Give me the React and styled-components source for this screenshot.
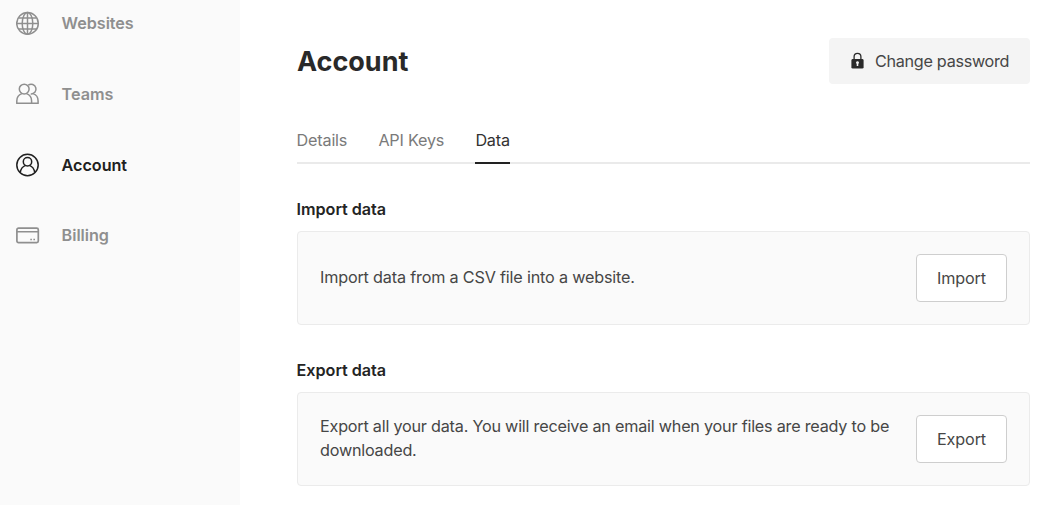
import React from "react";
import styled, { createGlobalStyle } from "styled-components";

const GlobalStyle = createGlobalStyle`
  * { box-sizing: border-box; }
  body {
    margin: 0;
    background: #fff;
    color: #3d3d3d;
    font-family: Inter, "Liberation Sans", sans-serif;
    font-size: 16.2px;
    font-weight: 400;
    overflow: hidden;
  }
`;

const Layout = styled.div`
  display: flex;
  height: 505px;
  width: 1051px;
`;

const Sidebar = styled.nav`
  width: 240px;
  flex: none;
  background: #fafafa;
  padding-left: 16px;
  display: flex;
  flex-direction: column;
  gap: 46.7px;
`;

const NavItem = styled.a`
  display: flex;
  align-items: center;
  gap: 21.6px;
  height: 24px;
  font-weight: 600;
  font-size: 16.2px;
  letter-spacing: -0.05px;
  line-height: 22px;
  color: ${(p) => (p.$active ? "#202020" : "#8f8f8f")};
  &:first-child { margin-top: 11.3px; }
`;

const NavIcon = styled.svg`
  width: 24px;
  height: 24px;
  flex: none;
  fill: none;
  stroke: currentColor;
  stroke-width: 1.5;
`;

const Main = styled.main`
  flex: 1;
  padding: 38px 21px 0 57px;
`;

const Header = styled.header`
  display: flex;
  justify-content: space-between;
  align-items: center;
  height: 46px;
`;

const Title = styled.h1`
  margin: 2px 0 0;
  font-size: 27px;
  line-height: 32px;
  font-weight: 700;
  color: #292929;
`;

const PasswordButton = styled.button`
  display: flex;
  align-items: center;
  gap: 10px;
  width: 201px;
  height: 46px;
  padding: 0 0 0 22px;
  border: 0;
  border-radius: 4px;
  background: #f4f4f4;
  color: #464646;
  font: inherit;
  letter-spacing: -0.3px;
  white-space: nowrap;
`;

const Tabs = styled.div`
  display: flex;
  gap: 31.2px;
  height: 40px;
  margin-top: 40px;
  margin-left: -0.4px;
  letter-spacing: -0.2px;
  border-bottom: 2px solid #eaeaea;
`;

const Tab = styled.span`
  height: 40px;
  line-height: 32px;
  color: ${(p) => (p.$active ? "#323232" : "#7a7a7a")};
  border-bottom: 2px solid ${(p) => (p.$active ? "#222" : "transparent")};
`;

const Section = styled.section`
  margin-top: 34px;
`;

const SectionTitle = styled.h2`
  margin: 0 0 11px -0.4px;
  font-size: 16.2px;
  font-weight: 600;
  letter-spacing: -0.05px;
  line-height: 22px;
  color: #242424;
`;

const Card = styled.div`
  display: flex;
  justify-content: space-between;
  align-items: center;
  height: 94px;
  padding: 0 22px;
  border: 1px solid #ebebeb;
  border-radius: 4px;
  background: #fafafa;
`;

const CardText = styled.p`
  margin: 0 0 2px;
  line-height: 24px;
  max-width: 580px;
  letter-spacing: ${(p) => p.$tracking}px;
  color: #464646;
`;

const CardButton = styled.button`
  width: 91px;
  height: 48px;
  flex: none;
  padding: 0;
  border: 1px solid #cecece;
  border-radius: 4px;
  background: #fff;
  color: #464646;
  font: inherit;
  letter-spacing: -0.12px;
`;

const GlobeIcon = () => (
  <NavIcon viewBox="0 0 24 24">
    <circle cx="11.5" cy="12.4" r="10.8" />
    <ellipse cx="11.5" cy="12.4" rx="5.3" ry="10.8" />
    <path d="M11.5 1.6v21.6M.7 12.4h21.6M2.5 6.9h18M2.5 17.9h18" />
  </NavIcon>
);

const TeamIcon = () => (
  <NavIcon viewBox="0 0 24 24">
    <circle cx="8.2" cy="7.1" r="4.9" />
    <path d="M.8 21.2v-2.3c0-3.7 2.3-6.4 5.1-7.3M10.5 11.6c2.8.9 5.1 3.6 5.1 7.3v2.3M.1 21.2h22.7M12.3 3.1a4.9 4.9 0 1 1 2.4 8.9M17.1 11.6c2.8.9 5 3.6 5 7.3v2.3" />
  </NavIcon>
);

const UserIcon = () => (
  <NavIcon viewBox="0 0 24 24">
    <circle cx="11.5" cy="12" r="10.7" />
    <circle cx="11.5" cy="8.7" r="4.2" />
    <path d="M4.2 19.6c.6-3.5 2.6-6.2 5.4-7.2M13.4 12.4c2.8 1 4.8 3.7 5.4 7.2" />
  </NavIcon>
);

const CardIcon = () => (
  <NavIcon viewBox="0 0 24 24">
    <rect x=".9" y="5.2" width="21.4" height="14.4" rx="1.6" strokeWidth="1.7" />
    <path d="M.8 8.8h21.6M14.3 16.4h1.6M17.4 16.4h1.6" />
  </NavIcon>
);

const LockGlyph = styled.svg`
  width: 14px;
  height: 18px;
  flex: none;
`;

const LockIcon = () => (
  <LockGlyph viewBox="0 0 14 18">
    <path d="M3.1 8V4.7a3.4 3.4 0 0 1 6.8 0V8" fill="none" stroke="#292929" strokeWidth="1.3" />
    <rect x=".4" y="7" width="12.2" height="9.6" rx="1.4" fill="#292929" />
    <path d="M6.5 9.2a1.4 1.4 0 0 1 .8 2.6v2.2H5.7v-2.2a1.4 1.4 0 0 1 .8-2.6z" fill="#f4f4f4" />
  </LockGlyph>
);

const navItems = [
  { label: "Websites", Icon: GlobeIcon },
  { label: "Teams", Icon: TeamIcon },
  { label: "Account", Icon: UserIcon, active: true },
  { label: "Billing", Icon: CardIcon },
];

export default function App() {
  return (
    <>
      <GlobalStyle />
      <Layout>
        <Sidebar>
          {navItems.map(({ label, Icon, active }) => (
            <NavItem key={label} $active={active}>
              <Icon />
              {label}
            </NavItem>
          ))}
        </Sidebar>
        <Main>
          <Header>
            <Title>Account</Title>
            <PasswordButton>
              <LockIcon />
              Change password
            </PasswordButton>
          </Header>
          <Tabs>
            <Tab>Details</Tab>
            <Tab>API Keys</Tab>
            <Tab $active>Data</Tab>
          </Tabs>
          <Section>
            <SectionTitle>Import data</SectionTitle>
            <Card>
              <CardText $tracking={-0.18}>Import data from a CSV file into a website.</CardText>
              <CardButton>Import</CardButton>
            </Card>
          </Section>
          <Section>
            <SectionTitle>Export data</SectionTitle>
            <Card>
              <CardText $tracking={-0.22}>
                Export all your data. You will receive an email when your files are ready to be downloaded.
              </CardText>
              <CardButton>Export</CardButton>
            </Card>
          </Section>
        </Main>
      </Layout>
    </>
  );
}
